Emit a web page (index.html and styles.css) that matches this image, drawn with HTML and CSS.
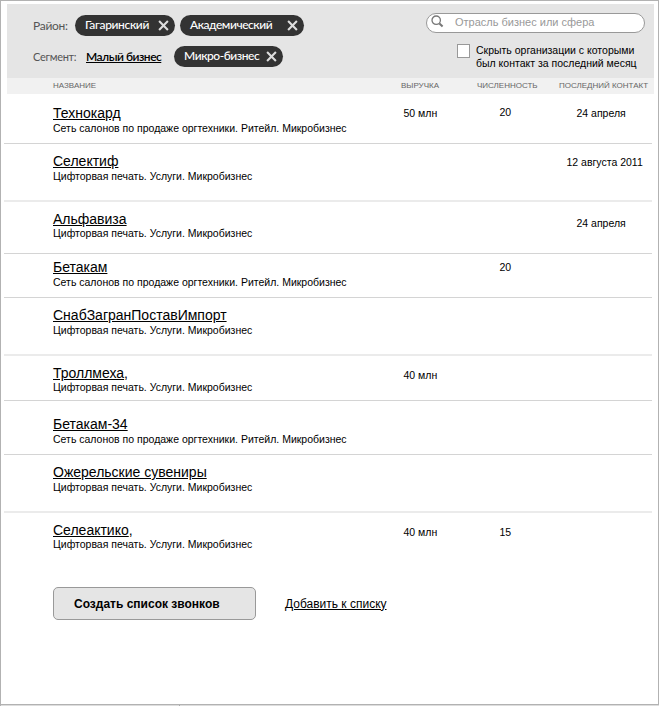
FILE: index.html
```
<!DOCTYPE html>
<html lang="ru">
<head>
<meta charset="utf-8">
<title>Организации</title>
<link rel="stylesheet" href="styles.css">
</head>
<body>
<main class="panel">
  <header class="filters">
    <div class="filter-groups">
      <div class="filter district">
        <span class="label label-district">Район:</span>
        <span class="chip chip-a"><span>Гагаринский</span><svg class="close" viewBox="0 0 10 10"><path d="M1 1l8 8M9 1l-8 8"/></svg></span>
        <span class="chip chip-b"><span>Академический</span><svg class="close" viewBox="0 0 10 10"><path d="M1 1l8 8M9 1l-8 8"/></svg></span>
      </div>
      <div class="filter segment">
        <span class="label label-segment">Сегмент:</span>
        <a class="segment-link">Малый бизнес</a>
        <span class="chip chip-c"><span>Микро-бизнес</span><svg class="close" viewBox="0 0 10 10"><path d="M1 1l8 8M9 1l-8 8"/></svg></span>
      </div>
    </div>
    <div class="search-side">
      <div class="search">
        <svg class="lens" viewBox="0 0 14 14"><circle cx="5.2" cy="5.2" r="4.2"/><path class="handle" d="M8.4 8.4l3.2 3"/></svg>
        <span class="placeholder">Отрасль бизнес или сфера</span>
      </div>
      <label class="hide"><span class="box"></span><span class="hide-text">Скрыть организации с которыми<br>был контакт за последний месяц</span></label>
    </div>
  </header>
  <div class="columns">
    <span>Название</span><span>Выручка</span><span>Численность</span><span>Последний контакт</span>
  </div>
  <section class="list">
    <article class="row r1"><div class="org"><a class="name">Технокард</a><p>Сеть салонов по продаже оргтехники. Ритейл. Микробизнес</p></div><span class="rev">50 млн</span><span class="num">20</span><span class="last">24 апреля</span></article>
    <article class="row r2 soft"><div class="org"><a class="name">Селектиф</a><p>Цифторвая печать. Услуги. Микробизнес</p></div><span class="rev"></span><span class="num"></span><span class="last">12 августа 2011</span></article>
    <article class="row r3 tight"><div class="org"><a class="name">Альфавиза</a><p>Цифторвая печать. Услуги. Микробизнес</p></div><span class="rev"></span><span class="num"></span><span class="last">24 апреля</span></article>
    <article class="row r4"><div class="org"><a class="name">Бетакам</a><p>Сеть салонов по продаже оргтехники. Ритейл. Микробизнес</p></div><span class="rev"></span><span class="num">20</span></article>
    <article class="row r5 soft"><div class="org"><a class="name">СнабЗагранПоставИмпорт</a><p>Цифторвая печать. Услуги. Микробизнес</p></div></article>
    <article class="row r6 tight"><div class="org"><a class="name">Троллмеха</a>,<p>Цифторвая печать. Услуги. Микробизнес</p></div><span class="rev">40 млн</span></article>
    <article class="row r7"><div class="org"><a class="name">Бетакам-34</a><p>Сеть салонов по продаже оргтехники. Ритейл. Микробизнес</p></div></article>
    <article class="row r8 soft"><div class="org"><a class="name">Ожерельские сувениры</a><p>Цифторвая печать. Услуги. Микробизнес</p></div></article>
    <article class="row r9 tight"><div class="org"><a class="name">Селеактико</a>,<p>Цифторвая печать. Услуги. Микробизнес</p></div><span class="rev">40 млн</span><span class="num">15</span></article>
  </section>
  <div class="actions"><button class="create">Создать список звонков</button><a class="add">Добавить к списку</a></div>
</main>
<footer class="edge"></footer>
</body>
</html>
```
FILE: styles.css
```
* { box-sizing: border-box; }
body { margin: 0; background: #fff; font-family: "Liberation Sans", Arial, sans-serif; color: #000; }
.panel { width: 659px; height: 705px; border: 1px solid #b2b2b2; padding: 3px 4px 0 3px; display: flex; flex-direction: column; }
.edge { height: 1px; width: 659px; background: #ddd; border-left: 1px solid #b2b2b2; display: flex; }
.edge::before { content: ""; width: 1px; height: 1px; margin-left: 178px; background: #aaa; }
.filters { height: 74px; margin-left: 3px; background: #e5e5e5; display: flex; justify-content: space-between; }
.filter-groups { font-family: Lato, "Open Sans", sans-serif; padding: 11px 0 0 26px; }
.filter { display: flex; align-items: center; height: 21px; }
.segment { margin-top: 10px; }
.label { color: #555; font-size: 12px; letter-spacing: -0.3px; }
.label-district { width: 42px; }
.label-segment { width: 53px; font-size: 11px; }
.segment-link { width: 88px; font-size: 12px; font-weight: 600; letter-spacing: -0.5px; text-decoration: underline; white-space: nowrap; }
.chip { height: 21px; border-radius: 10.5px; background: #333; color: #fff; font-size: 12px; font-weight: 500; letter-spacing: -0.45px; display: flex; align-items: center; justify-content: space-between; padding: 0 6px 0 10px; white-space: nowrap; }
.chip span { padding-bottom: 2px; }
.chip-a { width: 100px; letter-spacing: -0.36px; }
.chip-b { width: 124px; margin-left: 5px; }
.chip-c { width: 109px; }
.close { width: 11px; height: 11px; fill: none; stroke: #ddd; stroke-width: 1.9; }
.search-side { width: 228px; padding-top: 9px; }
.search { width: 219px; height: 20px; border: 1px solid #999; border-radius: 10px; background: #fff; display: flex; align-items: center; padding-left: 4px; }
.lens { width: 14px; height: 14px; margin-top: -2px; fill: none; stroke: #777; stroke-width: 1.3; }
.handle { stroke-width: 2; }
.placeholder { margin: -2px 0 0 10px; font-size: 11px; color: #999; white-space: nowrap; }
.hide { display: flex; margin: 11px 0 0 31px; }
.box { width: 13px; height: 14px; border: 1px solid #999; background: #fff; }
.hide-text { margin-left: 6px; font-size: 10.5px; line-height: 13px; white-space: nowrap; }
.columns { height: 16px; margin-left: 3px; background: #f1f1f1; color: #666; font-size: 8px; line-height: 16px; text-transform: uppercase; display: grid; grid-template-columns: 348px 76px 82px 1fr; padding-left: 46px; white-space: nowrap; }
.list { width: 648px; }
.row { display: grid; grid-template-columns: 350.5px 96px 77px 1fr; padding-left: 49px; border-bottom: 1px solid #d4d4d4; font-size: 10.5px; }
.soft { border-bottom: 2px solid #ebebeb; }
.r1 { height: 50px; padding-top: 11px; }
.r2 { height: 58px; padding-top: 9px; }
.r3 { height: 52px; padding-top: 9px; }
.r4 { height: 44px; padding-top: 5px; }
.r5 { height: 58px; padding-top: 9px; }
.r6 { height: 45px; padding-top: 9px; }
.r7 { height: 54px; padding-top: 15px; }
.r8 { height: 58px; padding-top: 9px; }
.r9 { height: 74px; padding-top: 9px; border: 0; }
.org { white-space: nowrap; line-height: 16px; font-size: 14px; }
.name { text-decoration: underline; }
.org p { margin: 1px 0 0; font-size: 10.5px; line-height: 13px; }
.tight .org p { margin-top: 0; }
.rev, .num, .last { line-height: 16px; white-space: nowrap; }
.r1 .num { margin-top: -1px; }
.r2 .last { padding-top: 1px; margin-left: -10px; }
.r3 .last { padding-top: 4px; }
.r6 .rev, .r9 .rev, .r9 .num { padding-top: 2px; }
.actions { display: flex; align-items: center; padding-left: 49px; }
.create { width: 203px; height: 33px; border: 1px solid #999; border-radius: 5px; background: #e5e5e5; font: bold 12px "Liberation Sans", Arial, sans-serif; text-align: left; padding: 0 0 0 20px; }
.add { margin-left: 29px; font-size: 12px; text-decoration: underline; }
```
